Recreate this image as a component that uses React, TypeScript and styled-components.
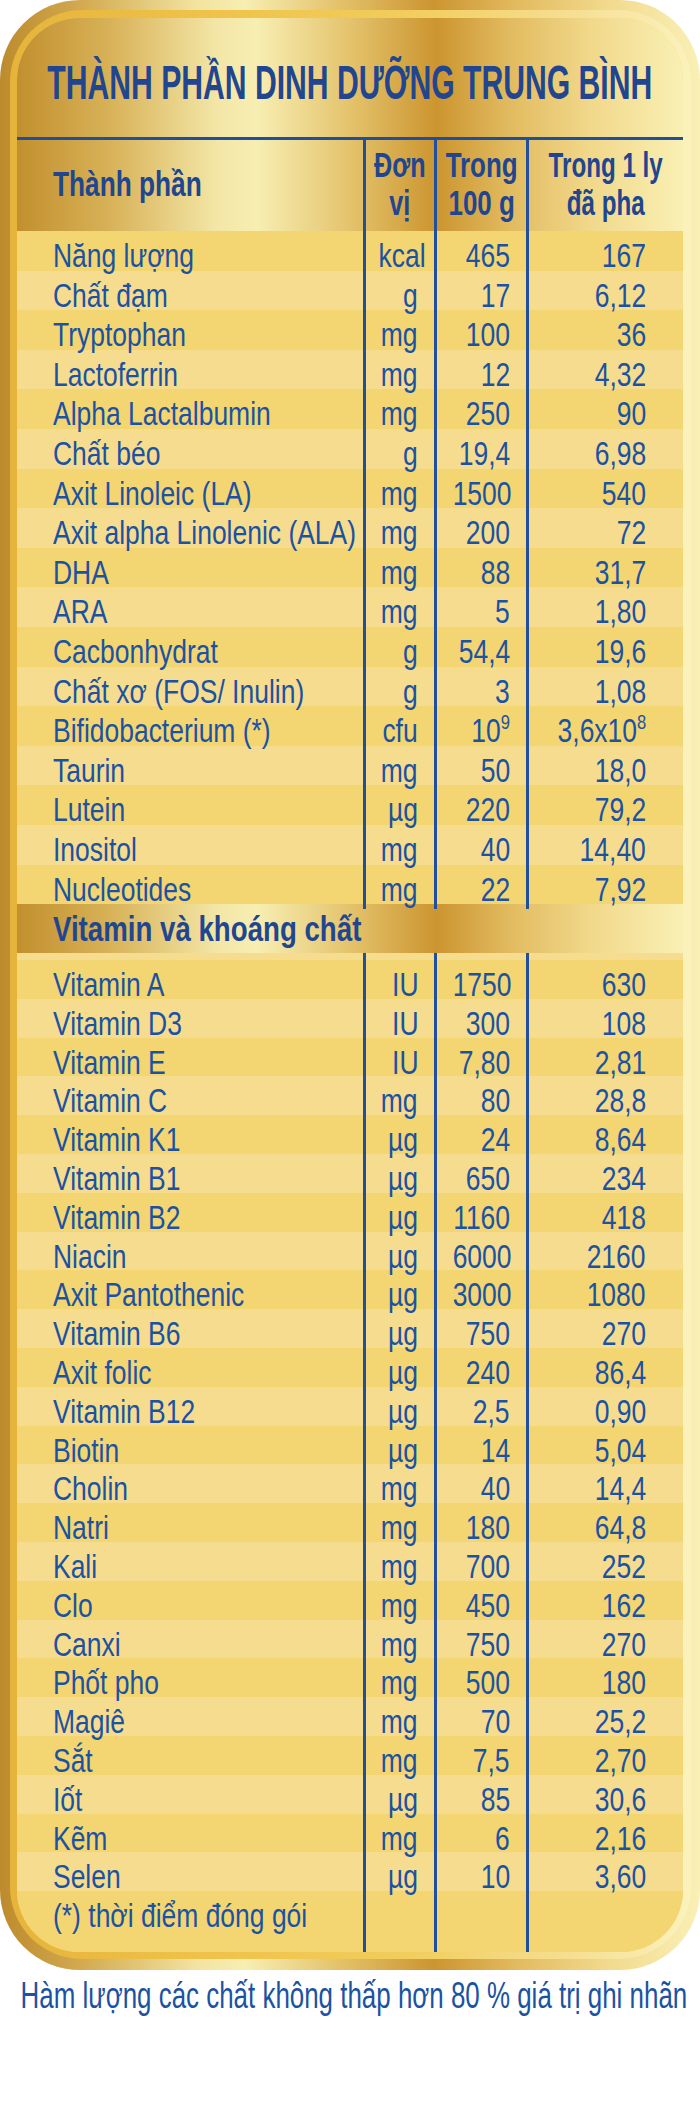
import * as React from 'react';
import styled, { createGlobalStyle } from 'styled-components';

type Row = {
  name: string;
  unit: string;
  per100: React.ReactNode;
  perCup: React.ReactNode;
};

const TEXT = '#1b52a2';
const HEAD = '#21468f';
const LINE = '#1f4f9d';
const STRIPE_DARK = '#f3d572';
const STRIPE_LIGHT = '#f6dc8e';

const FRAME_GOLD =
  'linear-gradient(90deg, #bd8b2c 0%, #d3ab52 12%, #f2e3a0 28%, #f7eeb2 35%, #e3c068 49%, #cc9532 62%, #e3bb60 74%, #f2da8e 87%, #f9f0b6 100%)';
const PANEL_GOLD =
  'linear-gradient(90deg, #c2902e 0%, #d8b258 14%, #f3e6a6 30%, #f7eeb2 36%, #e4c36c 50%, #cc9530 63%, #e2bb60 74%, #f1d88a 86%, #f9f0b4 100%)';
const RING =
  'linear-gradient(90deg, #e6b43a 0%, #efc34a 30%, #f1cd5c 58%, #f6e096 84%, #fbf2bc 100%)';

const FONT = `'Liberation Sans', Arial, sans-serif`;
const BODY_SCALE = 0.79;

const GlobalStyle = createGlobalStyle`
  html, body {
    margin: 0;
    padding: 0;
    background: #ffffff;
  }
  body {
    font-family: ${FONT};
  }
`;

const Sup = styled.sup`
  font-size: 21px;
  line-height: 0;
  vertical-align: 13px;
`;

const MAIN: Row[] = [
  { name: 'Năng lượng', unit: 'kcal', per100: '465', perCup: '167' },
  { name: 'Chất đạm', unit: 'g', per100: '17', perCup: '6,12' },
  { name: 'Tryptophan', unit: 'mg', per100: '100', perCup: '36' },
  { name: 'Lactoferrin', unit: 'mg', per100: '12', perCup: '4,32' },
  { name: 'Alpha Lactalbumin', unit: 'mg', per100: '250', perCup: '90' },
  { name: 'Chất béo', unit: 'g', per100: '19,4', perCup: '6,98' },
  { name: 'Axit Linoleic (LA)', unit: 'mg', per100: '1500', perCup: '540' },
  { name: 'Axit alpha Linolenic (ALA)', unit: 'mg', per100: '200', perCup: '72' },
  { name: 'DHA', unit: 'mg', per100: '88', perCup: '31,7' },
  { name: 'ARA', unit: 'mg', per100: '5', perCup: '1,80' },
  { name: 'Cacbonhydrat', unit: 'g', per100: '54,4', perCup: '19,6' },
  { name: 'Chất xơ (FOS/ Inulin)', unit: 'g', per100: '3', perCup: '1,08' },
  {
    name: 'Bifidobacterium (*)',
    unit: 'cfu',
    per100: (
      <>
        10<Sup>9</Sup>
      </>
    ),
    perCup: (
      <>
        3,6x10<Sup>8</Sup>
      </>
    ),
  },
  { name: 'Taurin', unit: 'mg', per100: '50', perCup: '18,0' },
  { name: 'Lutein', unit: 'µg', per100: '220', perCup: '79,2' },
  { name: 'Inositol', unit: 'mg', per100: '40', perCup: '14,40' },
  { name: 'Nucleotides', unit: 'mg', per100: '22', perCup: '7,92' },
];

const VITAMINS: Row[] = [
  { name: 'Vitamin A', unit: 'IU', per100: '1750', perCup: '630' },
  { name: 'Vitamin D3', unit: 'IU', per100: '300', perCup: '108' },
  { name: 'Vitamin E', unit: 'IU', per100: '7,80', perCup: '2,81' },
  { name: 'Vitamin C', unit: 'mg', per100: '80', perCup: '28,8' },
  { name: 'Vitamin K1', unit: 'µg', per100: '24', perCup: '8,64' },
  { name: 'Vitamin B1', unit: 'µg', per100: '650', perCup: '234' },
  { name: 'Vitamin B2', unit: 'µg', per100: '1160', perCup: '418' },
  { name: 'Niacin', unit: 'µg', per100: '6000', perCup: '2160' },
  { name: 'Axit Pantothenic', unit: 'µg', per100: '3000', perCup: '1080' },
  { name: 'Vitamin B6', unit: 'µg', per100: '750', perCup: '270' },
  { name: 'Axit folic', unit: 'µg', per100: '240', perCup: '86,4' },
  { name: 'Vitamin B12', unit: 'µg', per100: '2,5', perCup: '0,90' },
  { name: 'Biotin', unit: 'µg', per100: '14', perCup: '5,04' },
  { name: 'Cholin', unit: 'mg', per100: '40', perCup: '14,4' },
  { name: 'Natri', unit: 'mg', per100: '180', perCup: '64,8' },
  { name: 'Kali', unit: 'mg', per100: '700', perCup: '252' },
  { name: 'Clo', unit: 'mg', per100: '450', perCup: '162' },
  { name: 'Canxi', unit: 'mg', per100: '750', perCup: '270' },
  { name: 'Phốt pho', unit: 'mg', per100: '500', perCup: '180' },
  { name: 'Magiê', unit: 'mg', per100: '70', perCup: '25,2' },
  { name: 'Sắt', unit: 'mg', per100: '7,5', perCup: '2,70' },
  { name: 'Iốt', unit: 'µg', per100: '85', perCup: '30,6' },
  { name: 'Kẽm', unit: 'mg', per100: '6', perCup: '2,16' },
  { name: 'Selen', unit: 'µg', per100: '10', perCup: '3,60' },
];

function DataRows({ rows, height }: { rows: Row[]; height: number }) {
  return (
    <>
      {rows.map((row, i) => (
        <Line key={row.name} $height={height} $tone={i % 2 === 0 ? 'dark' : 'light'}>
          <NameCell>
            <Squeeze $scale={BODY_SCALE} $origin="left">
              {row.name}
            </Squeeze>
          </NameCell>
          <ValueCell $pad={16}>
            <Squeeze $scale={BODY_SCALE} $origin="right">
              {row.unit}
            </Squeeze>
          </ValueCell>
          <ValueCell $pad={16}>
            <Squeeze $scale={BODY_SCALE} $origin="right">
              {row.per100}
            </Squeeze>
          </ValueCell>
          <ValueCell $pad={37}>
            <Squeeze $scale={BODY_SCALE} $origin="right">
              {row.perCup}
            </Squeeze>
          </ValueCell>
        </Line>
      ))}
    </>
  );
}

function EmptyLine({ height, tone }: { height: number; tone: 'dark' | 'light' }) {
  return (
    <Line $height={height} $tone={tone}>
      <NameCell />
      <ValueCell $pad={16} />
      <ValueCell $pad={16} />
      <ValueCell $pad={37} />
    </Line>
  );
}

function App() {
  return (
    <Page>
      <GlobalStyle />
      <Frame>
        <Ring>
          <Panel>
            <Top>
              <Title>
                <Squeeze $scale={0.615} $origin="center">
                  THÀNH PHẦN DINH DƯỠNG TRUNG BÌNH
                </Squeeze>
              </Title>
              <HeaderRow>
                <HeadCell $align="left">
                  <Squeeze $scale={0.75} $origin="left">
                    Thành phần
                  </Squeeze>
                </HeadCell>
                <HeadCell $align="center" $divider>
                  <Squeeze $scale={0.72} $origin="center">
                    Đơn
                    <br />
                    vị
                  </Squeeze>
                </HeadCell>
                <HeadCell $align="center" $divider>
                  <Squeeze $scale={0.74} $origin="center">
                    Trong
                    <br />
                    100 g
                  </Squeeze>
                </HeadCell>
                <HeadCell $align="center" $divider>
                  <Squeeze $scale={0.69} $origin="center">
                    Trong 1 ly
                    <br />
                    đã pha
                  </Squeeze>
                </HeadCell>
              </HeaderRow>
            </Top>

            <DataRows rows={MAIN} height={39.6} />

            <Band>
              <Squeeze $scale={0.79} $origin="left">
                Vitamin và khoáng chất
              </Squeeze>
            </Band>

            <EmptyLine height={7} tone="light" />

            <DataRows rows={VITAMINS} height={38.8} />

            <Line $height={39} $tone="dark">
              <NameCell>
                <Squeeze $scale={BODY_SCALE} $origin="left">
                  (*) thời điểm đóng gói
                </Squeeze>
              </NameCell>
              <ValueCell $pad={16} />
              <ValueCell $pad={16} />
              <ValueCell $pad={37} />
            </Line>
            <EmptyLine height={22} tone="dark" />
          </Panel>
        </Ring>
      </Frame>
      <Footer>
        <Squeeze $scale={0.72} $origin="center">
          Hàm lượng các chất không thấp hơn 80 % giá trị ghi nhãn
        </Squeeze>
      </Footer>
    </Page>
  );
}

const Page = styled.div`
  width: 700px;
  height: 2105px;
  background: #ffffff;
  overflow: hidden;
`;

const Frame = styled.div`
  padding: 10px 9px 11px 10px;
  border-radius: 80px;
  background: ${FRAME_GOLD};
`;

const Ring = styled.div`
  padding: 8px 8px 7px 7px;
  border-radius: 72px;
  background: ${RING};
`;

const Panel = styled.div`
  border-radius: 62px;
  overflow: hidden;
  background: ${STRIPE_DARK};
`;

const Top = styled.div`
  background: ${PANEL_GOLD};
`;

const Squeeze = styled.span<{ $scale: number; $origin: 'left' | 'right' | 'center' }>`
  display: inline-block;
  flex-shrink: 0;
  white-space: nowrap;
  transform: scaleX(${(p) => p.$scale});
  transform-origin: ${(p) => p.$origin} center;
`;

const Title = styled.h1`
  display: flex;
  justify-content: center;
  margin: 0;
  padding: 40px 0 30px;
  height: 119px;
  box-sizing: border-box;
  font-family: ${FONT};
  font-weight: 700;
  font-size: 49px;
  line-height: 49px;
  color: ${HEAD};
`;

const COLUMNS = '346px 71px 92px 157px';

const HeaderRow = styled.div`
  display: grid;
  grid-template-columns: ${COLUMNS};
  height: 94px;
  box-sizing: border-box;
  border-top: 3px solid ${LINE};
`;

const HeadCell = styled.div<{ $align: 'left' | 'center'; $divider?: boolean }>`
  display: flex;
  align-items: center;
  justify-content: ${(p) => (p.$align === 'left' ? 'flex-start' : 'center')};
  box-sizing: border-box;
  padding: 0 0 4px ${(p) => (p.$align === 'left' ? '36px' : '0')};
  border-left: ${(p) => (p.$divider ? `3px solid ${LINE}` : 'none')};
  text-align: center;
  font-weight: 700;
  font-size: 35px;
  line-height: 38px;
  color: ${HEAD};
`;

const Line = styled.div<{ $height: number; $tone: 'dark' | 'light' }>`
  display: grid;
  grid-template-columns: ${COLUMNS};
  height: ${(p) => p.$height}px;
  background: ${(p) => (p.$tone === 'dark' ? STRIPE_DARK : STRIPE_LIGHT)};
  font-size: 33.5px;
  line-height: 39px;
  color: ${TEXT};
`;

const NameCell = styled.div`
  box-sizing: border-box;
  padding: 5px 0 0 36px;
  white-space: nowrap;
`;

const ValueCell = styled.div<{ $pad: number }>`
  box-sizing: border-box;
  padding: 5px ${(p) => p.$pad}px 0 0;
  border-left: 3px solid ${LINE};
  text-align: right;
  white-space: nowrap;
`;

const Band = styled.div`
  height: 49px;
  box-sizing: border-box;
  padding: 2px 0 0 36px;
  background: ${PANEL_GOLD};
  font-weight: 700;
  font-size: 35px;
  line-height: 45px;
  color: ${HEAD};
`;

const Footer = styled.p`
  display: flex;
  justify-content: center;
  margin: 6px 0 0;
  padding-left: 8px;
  font-family: ${FONT};
  font-size: 36px;
  line-height: 40px;
  color: ${TEXT};
`;

export default App;
